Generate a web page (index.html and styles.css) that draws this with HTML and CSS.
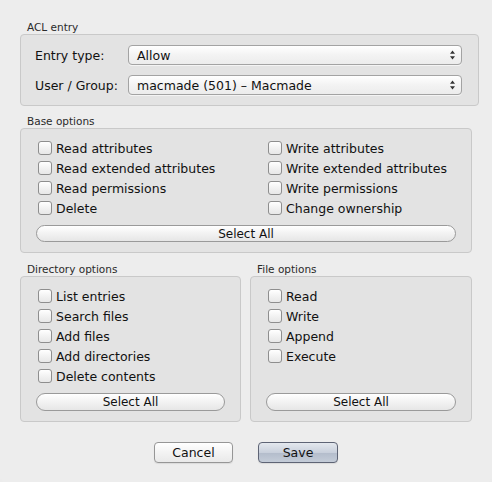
FILE: index.html
```html
<!DOCTYPE html>
<html>
<head>
<meta charset="utf-8">
<link rel="stylesheet" href="styles.css">
</head>
<body>
<div class="window">
  <section class="group acl">
    <div class="group-title">ACL entry</div>
    <div class="group-box acl-box">
      <div class="form-row">
        <label class="form-label">Entry type:</label>
        <div class="popup"><span class="popup-text">Allow</span><span class="arrows"><svg width="7" height="10" viewBox="0 0 7 10"><path d="M3.5 0.5 L6 3.8 L1 3.8 Z M3.5 9.5 L6 6.2 L1 6.2 Z" fill="#333"/></svg></span></div>
      </div>
      <div class="form-row">
        <label class="form-label">User / Group:</label>
        <div class="popup"><span class="popup-text">macmade (501) – Macmade</span><span class="arrows"><svg width="7" height="10" viewBox="0 0 7 10"><path d="M3.5 0.5 L6 3.8 L1 3.8 Z M3.5 9.5 L6 6.2 L1 6.2 Z" fill="#333"/></svg></span></div>
      </div>
    </div>
  </section>

  <section class="group base">
    <div class="group-title">Base options</div>
    <div class="group-box">
      <div class="check-grid">
        <div class="check"><span class="box"></span>Read attributes</div>
        <div class="check"><span class="box"></span>Write attributes</div>
        <div class="check"><span class="box"></span>Read extended attributes</div>
        <div class="check"><span class="box"></span>Write extended attributes</div>
        <div class="check"><span class="box"></span>Read permissions</div>
        <div class="check"><span class="box"></span>Write permissions</div>
        <div class="check"><span class="box"></span>Delete</div>
        <div class="check"><span class="box"></span>Change ownership</div>
      </div>
      <div class="pill">Select All</div>
    </div>
  </section>

  <div class="split">
    <section class="group dir">
      <div class="group-title">Directory options</div>
      <div class="group-box col-box">
        <div class="check-list">
          <div class="check"><span class="box"></span>List entries</div>
          <div class="check"><span class="box"></span>Search files</div>
          <div class="check"><span class="box"></span>Add files</div>
          <div class="check"><span class="box"></span>Add directories</div>
          <div class="check"><span class="box"></span>Delete contents</div>
        </div>
        <div class="pill">Select All</div>
      </div>
    </section>
    <section class="group file">
      <div class="group-title">File options</div>
      <div class="group-box col-box">
        <div class="check-list">
          <div class="check"><span class="box"></span>Read</div>
          <div class="check"><span class="box"></span>Write</div>
          <div class="check"><span class="box"></span>Append</div>
          <div class="check"><span class="box"></span>Execute</div>
        </div>
        <div class="pill">Select All</div>
      </div>
    </section>
  </div>

  <div class="actions">
    <div class="btn">Cancel</div>
    <div class="btn primary">Save</div>
  </div>
</div>
</body>
</html>
```

FILE: styles.css
```css
html, body {
  margin: 0;
  padding: 0;
  background: #ececec;
}
.window {
  width: 492px;
  height: 482px;
  box-sizing: border-box;
  padding: 20px 0 0 20px;
  background: #ededed;
  font-family: "DejaVu Sans", "Liberation Sans", sans-serif;
  font-size: 12px;
  color: #111;
  border-radius: 0 0 5px 5px;
  overflow: hidden;
}
.group-title {
  height: 14px;
  line-height: 14px;
  font-size: 10.5px;
  color: #2a2a2a;
  padding-left: 7px;
}
.group-box {
  background: #e3e3e3;
  border: 1px solid #c9c9c9;
  border-radius: 4px;
  box-sizing: border-box;
}
.acl .group-box {
  width: 459px;
  padding: 10px 16px 10px 14px;
  display: flex;
  flex-direction: column;
  gap: 10px;
}
.form-row {
  display: grid;
  grid-template-columns: 93px 1fr;
  align-items: center;
  height: 20px;
}
.form-label {
  font-size: 12.5px;
  color: #111;
}
.popup {
  height: 20px;
  box-sizing: border-box;
  border: 1px solid #a3a3a3;
  border-radius: 4px;
  background: linear-gradient(#ffffff, #f3f3f3 50%, #ececec);
  display: flex;
  align-items: center;
  justify-content: space-between;
  padding: 0 5px 0 8px;
  font-size: 12.5px;
  box-shadow: 0 1px 0 rgba(255,255,255,0.6);
}
.arrows {
  display: flex;
  align-items: center;
}
.base {
  margin-top: 8px;
}
.base .group-box {
  width: 452px;
  padding: 9px 15px 10px 15px;
}
.check-grid {
  display: grid;
  grid-template-columns: 230px 1fr;
  padding-left: 2px;
}
.check {
  height: 20px;
  display: flex;
  align-items: center;
  font-size: 12.5px;
  white-space: nowrap;
}
.box {
  width: 14px;
  height: 14px;
  box-sizing: border-box;
  border: 1px solid #8e8e8e;
  border-radius: 3px;
  background: linear-gradient(#ffffff, #f0f0f0 60%, #e8e8e8);
  margin-right: 4px;
  flex: none;
}
.pill {
  height: 17px;
  box-sizing: border-box;
  border: 1px solid #9a9a9a;
  border-radius: 9px;
  background: linear-gradient(#ffffff, #f2f2f2 50%, #e6e6e6);
  display: flex;
  align-items: center;
  justify-content: center;
  font-size: 12px;
  margin-top: 7px;
}
.split {
  display: flex;
  gap: 9px;
  margin-top: 9px;
}
.dir .group-box {
  width: 221px;
}
.file .group-box {
  width: 222px;
}
.col-box {
  height: 146px;
  padding: 9px 15px 10px 15px;
  display: flex;
  flex-direction: column;
}
.check-list {
  padding-left: 2px;
}
.col-box .pill {
  margin-top: auto;
  height: 18px;
}
.actions {
  display: flex;
  justify-content: center;
  gap: 25px;
  margin-top: 20px;
  margin-left: -20px;
}
.btn {
  width: 79px;
  height: 21px;
  box-sizing: border-box;
  border: 1px solid #969696;
  border-radius: 4px;
  background: linear-gradient(#ffffff, #f3f3f3 50%, #e9e9e9);
  display: flex;
  align-items: center;
  justify-content: center;
  font-size: 12.5px;
  box-shadow: 0 1px 1px rgba(0,0,0,0.08);
}
.btn.primary {
  width: 80px;
  border-color: #5e6475;
  background: linear-gradient(#e4e8ee, #c9d0dc 50%, #b3bccb 51%, #c4ccd8);
}
```
